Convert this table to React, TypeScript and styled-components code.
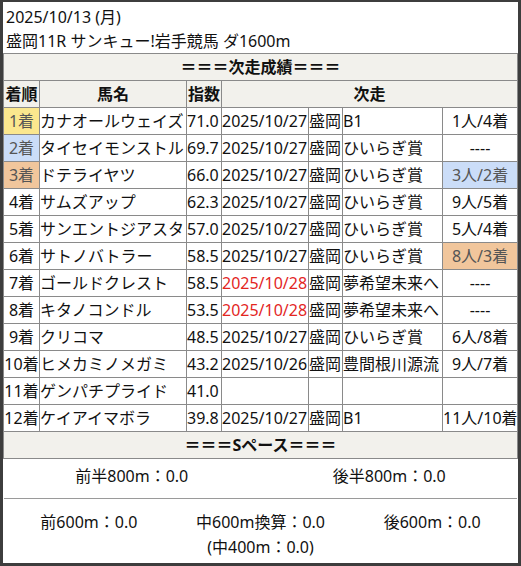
import React from 'react'
import styled, { createGlobalStyle } from 'styled-components'

const GlobalStyle = createGlobalStyle`
  html, body {
    margin: 0;
    padding: 0;
    background: #fff;
  }
  body {
    font-family: "Noto Sans", "Noto Sans CJK JP", sans-serif;
    font-size: 16px;
    color: #111;
  }
`

const Frame = styled.div`
  box-sizing: border-box;
  width: 521px;
  height: 566px;
  border: 3px solid #3d3d3d;
  border-top-width: 2px;
  overflow: hidden;
`

const Title = styled.div`
  height: 51px;
  box-sizing: border-box;
  padding: 3px 0 0 3px;
  line-height: 24px;
`

const Table = styled.table`
  width: 515px;
  border-collapse: collapse;
  table-layout: fixed;
`

const Cell = styled.td<{ $align?: string; $bg?: string; $muted?: boolean; $red?: boolean }>`
  border: 1px solid #8a8a8a;
  padding: 0;
  height: 26px;
  line-height: 26px;
  white-space: nowrap;
  overflow: hidden;
  text-align: ${(p) => p.$align || 'left'};
  background: ${(p) => p.$bg || 'transparent'};
  color: ${(p) => (p.$red ? '#e3261f' : p.$muted ? '#555' : '#111')};
`

const Head = styled.th`
  border: 1px solid #8a8a8a;
  padding: 0;
  height: 26px;
  line-height: 26px;
  font-weight: bold;
  text-align: center;
  background: #f2f1ec;
  white-space: nowrap;
`

const Stats = styled.div`
  display: flex;
  padding: 5px 0 10px;
  line-height: 24px;
`

const Divider = styled.div`
  height: 1px;
  margin: 0 1px;
  background: #9a9a9a;
`

const StatsThree = styled.div`
  display: flex;
  padding: 11px 0 3px;
  line-height: 25px;
`

const Stat = styled.div`
  flex: 1;
  text-align: center;
`

const rankColors: Record<number, string> = {
  1: '#fbe78e',
  2: '#cbddf8',
  3: '#f1c69c',
}

const rows = [
  { rank: 1, name: 'カナオールウェイズ', idx: '71.0', date: '2025/10/27', place: '盛岡', race: 'B1', res: '1人/4着' },
  { rank: 2, name: 'タイセイモンストル', idx: '69.7', date: '2025/10/27', place: '盛岡', race: 'ひいらぎ賞', res: '----' },
  { rank: 3, name: 'ドテライヤツ', idx: '66.0', date: '2025/10/27', place: '盛岡', race: 'ひいらぎ賞', res: '3人/2着', resRank: 2 },
  { rank: 4, name: 'サムズアップ', idx: '62.3', date: '2025/10/27', place: '盛岡', race: 'ひいらぎ賞', res: '9人/5着' },
  { rank: 5, name: 'サンエントジアスタ', idx: '57.0', date: '2025/10/27', place: '盛岡', race: 'ひいらぎ賞', res: '5人/4着' },
  { rank: 6, name: 'サトノバトラー', idx: '58.5', date: '2025/10/27', place: '盛岡', race: 'ひいらぎ賞', res: '8人/3着', resRank: 3 },
  { rank: 7, name: 'ゴールドクレスト', idx: '58.5', date: '2025/10/28', place: '盛岡', race: '夢希望未来へ', res: '----', red: true },
  { rank: 8, name: 'キタノコンドル', idx: '53.5', date: '2025/10/28', place: '盛岡', race: '夢希望未来へ', res: '----', red: true },
  { rank: 9, name: 'クリコマ', idx: '48.5', date: '2025/10/27', place: '盛岡', race: 'ひいらぎ賞', res: '6人/8着' },
  { rank: 10, name: 'ヒメカミノメガミ', idx: '43.2', date: '2025/10/26', place: '盛岡', race: '豊間根川源流', res: '9人/7着' },
  { rank: 11, name: 'ゲンパチプライド', idx: '41.0', date: '', place: '', race: '', res: '' },
  { rank: 12, name: 'ケイアイマボラ', idx: '39.8', date: '2025/10/27', place: '盛岡', race: 'B1', res: '11人/10着' },
]

export default function App() {
  return (
    <Frame>
      <GlobalStyle />
      <Title>
        <div>2025/10/13 (月)</div>
        <div>盛岡11R サンキュー!岩手競馬 ダ1600m</div>
      </Title>
      <Table>
        <colgroup>
          <col style={{ width: 36 }} />
          <col style={{ width: 147 }} />
          <col style={{ width: 35 }} />
          <col style={{ width: 87 }} />
          <col style={{ width: 34 }} />
          <col style={{ width: 100 }} />
          <col style={{ width: 75 }} />
        </colgroup>
        <tbody>
          <tr>
            <Head colSpan={7}>＝＝＝次走成績＝＝＝</Head>
          </tr>
          <tr>
            <Head>着順</Head>
            <Head>馬名</Head>
            <Head>指数</Head>
            <Head colSpan={4}>次走</Head>
          </tr>
          {rows.map((r) => (
            <tr key={r.rank}>
              <Cell $align="center" $bg={rankColors[r.rank]} $muted={!!rankColors[r.rank]}>
                {r.rank}着
              </Cell>
              <Cell>{r.name}</Cell>
              <Cell>{r.idx}</Cell>
              <Cell $red={r.red}>{r.date}</Cell>
              <Cell>{r.place}</Cell>
              <Cell>{r.race}</Cell>
              <Cell
                $align="center"
                $bg={r.resRank ? rankColors[r.resRank] : undefined}
                $muted={!!r.resRank}
              >
                {r.res}
              </Cell>
            </tr>
          ))}
          <tr>
            <Head colSpan={7}>＝＝＝Sペース＝＝＝</Head>
          </tr>
        </tbody>
      </Table>
      <Stats>
        <Stat>前半800m：0.0</Stat>
        <Stat>後半800m：0.0</Stat>
      </Stats>
      <Divider />
      <StatsThree>
        <Stat>前600m：0.0</Stat>
        <Stat>
          中600m換算：0.0
          <br />
          (中400m：0.0)
        </Stat>
        <Stat>後600m：0.0</Stat>
      </StatsThree>
    </Frame>
  )
}
